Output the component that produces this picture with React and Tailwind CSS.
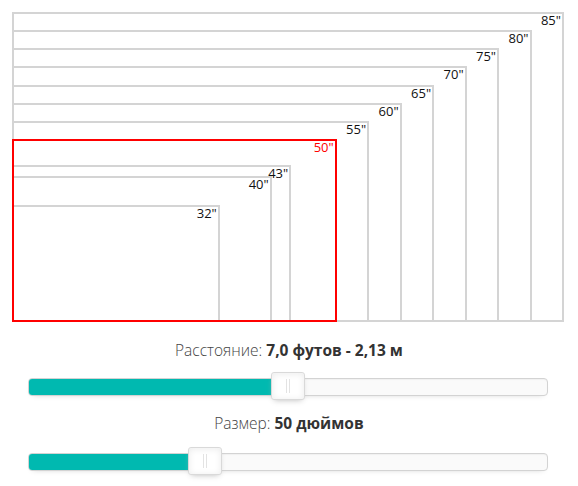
import React from "react";

const SIZES = [85, 80, 75, 70, 65, 60, 55, 50, 43, 40, 32];
const SELECTED = 50;

function Box({ size, selected }) {
  return (
    <div
      className={
        "absolute bottom-0 left-0 aspect-video border-2 " +
        (selected ? "z-10 border-[#ff0000]" : "border-[#d4d4d4]")
      }
      style={{ width: `${(size / 85) * 100}%` }}
    >
      <span
        className={
          "absolute right-[1px] top-0 text-[13px] leading-none " +
          (selected ? "text-[#ff0000]" : "text-[#111]")
        }
      >
        {size}"
      </span>
    </div>
  );
}

function Slider({ frac }) {
  return (
    <div className="relative h-[18px] w-full rounded-[4px] border border-[#d3d3d3] bg-[#fafafa] shadow-[inset_0_1px_1px_#f0f0f0,0_3px_6px_-5px_#bbb]">
      <div
        className="absolute bottom-0 left-0 top-0 rounded-l-[3px] bg-[#00b9b0]"
        style={{ width: `${frac * 100}%` }}
      />
      <div
        className="absolute top-[-7px] flex h-[28px] w-[34px] justify-center gap-[2px] rounded-[3px] border border-[#d9d9d9] bg-white pt-[6px] shadow-[inset_0_0_1px_#fff,inset_0_1px_7px_#ebebeb,0_3px_6px_-3px_#bbb]"
        style={{ left: `calc(${frac * 100}% - 17px)` }}
      >
        <div className="h-[14px] w-px bg-[#e3e3e3]" />
        <div className="h-[14px] w-px bg-[#e3e3e3]" />
      </div>
    </div>
  );
}

function Label({ name, value }) {
  return (
    <div className="h-[22px] text-center text-[15.5px] leading-[22px] text-[#444]">
      <span className="font-light">{name} </span>
      <span className="font-bold text-[#333]">{value}</span>
    </div>
  );
}

export default function App() {
  return (
    <div
      className="flex h-[486px] w-[578px] flex-col overflow-hidden bg-white pt-[11px]"
      style={{ fontFamily: '"Open Sans", "Noto Sans", sans-serif' }}
    >
      <div className="px-[14px] pl-[12px]">
        <div className="relative h-[311px] w-[552px]">
          {SIZES.map((s) => (
            <Box key={s} size={s} selected={s === SELECTED} />
          ))}
        </div>
      </div>

      <div className="mt-[17px] flex flex-col">
        <Label name="Расстояние:" value="7,0 футов - 2,13 м" />
        <div className="mt-[17px] pl-[28px] pr-[30px]">
          <Slider frac={0.5} />
        </div>
      </div>

      <div className="mt-[16px] flex flex-col">
        <Label name="Размер:" value="50 дюймов" />
        <div className="mt-[19px] pl-[28px] pr-[30px]">
          <Slider frac={18 / 53} />
        </div>
      </div>
    </div>
  );
}
